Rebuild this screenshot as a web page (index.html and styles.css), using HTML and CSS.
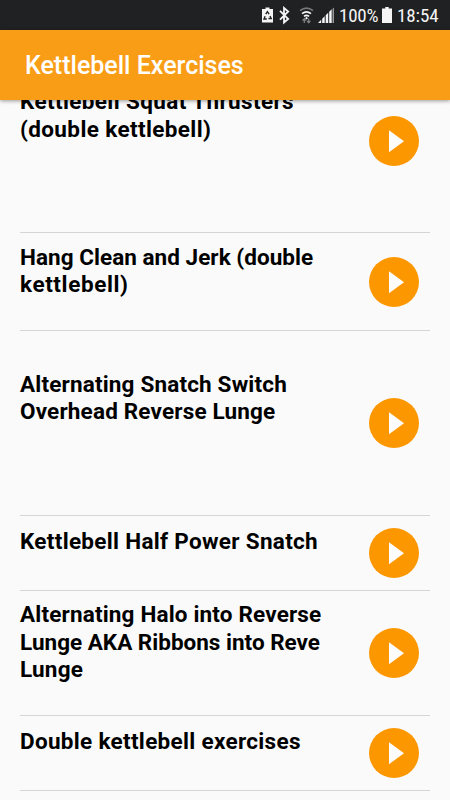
FILE: index.html
```html
<!DOCTYPE html>
<html lang="en">
<head>
<meta charset="utf-8">
<title>Kettlebell Exercises</title>
<link rel="stylesheet" href="styles.css">
</head>
<body>
<svg class="defs" aria-hidden="true">
  <symbol id="play" viewBox="0 0 50 50"><circle cx="25" cy="25" r="25" fill="#fc9700"/><path d="M20 14.200v22L35 25.200z" fill="#fcfcfc"/></symbol>
</svg>
<div class="status">
  <svg class="icons" viewBox="0 0 80 30" fill="none">
    <path d="M4.500 7.500h4V9H12v13.500H1V9h3.500z" fill="#f5f5f5"/>
    <path d="M4.700 14.200l1.700-2.500 1.700 2.500M9 16l1.200 2.500H7.500M5.800 19H3l1.100-2.800" stroke="#202122" stroke-width="1.400"/>
    <path d="M19 10.800l8.200 8.200-4.200 3.500V8l4.200 3.500L19 19.700" stroke="#f5f5f5" stroke-width="1.800"/>
    <path d="M39 10.700q6.500-5 13 0" stroke="#77787a" stroke-width="1.700"/>
    <path d="M41 13.700q4.500-3.500 9 0M43 16.400q2.500-1.900 5 0" stroke="#f5f5f5" stroke-width="1.700"/>
    <path d="M45.500 16.700l1.400 1.500-1.400 1.300-1.400-1.300z" fill="#f5f5f5"/>
    <path d="M43.300 23v-4M41.600 20.700l1.700-2 1.700 2M47.700 18.500v4M46 20.800l1.700 2 1.700-2" stroke="#808183" stroke-width="1.300"/>
    <path d="M57 23l3.200-3.200V23zM61.200 18.700l2.500-2.500V23h-2.500zM64.700 15.200l2.500-2.500V23h-2.500zM68.200 11.700l2.500-2.500V23h-2.500z" fill="#f5f5f5"/><path d="M71.500 9l1.500-1.500V23h-1.500z" fill="#999"/>
  </svg>
  <span class="percent">100%</span>
  <svg class="battery" viewBox="0 0 10 16"><path d="M3.300 0h3.400v1.500H10V16H0V1.500h3.300z" fill="#f5f5f5"/></svg>
  <span class="time">18:54</span>
</div>
<header class="bar"><h1>Kettlebell Exercises</h1></header>
<main class="list">
  <article class="row r1"><h2 class="two-extra"><span class="s39">Kettlebell Squat Thrusters</span><span class="s39">(double kettlebell)</span></h2><svg class="play"><use href="#play"/></svg></article>
  <article class="row r2"><h2><span class="s04">Hang Clean and Jerk (double</span><span class="s60">kettlebell)</span></h2><svg class="play"><use href="#play"/></svg></article>
  <article class="row r3"><h2 class="two-extra"><span class="s16">Alternating Snatch Switch</span><span class="s16">Overhead Reverse Lunge</span></h2><svg class="play"><use href="#play"/></svg></article>
  <article class="row r4"><h2><span class="s31">Kettlebell Half Power Snatch</span></h2><svg class="play"><use href="#play"/></svg></article>
  <article class="row r5"><h2><span class="s16">Alternating Halo into Reverse</span><span class="s00">Lunge AKA Ribbons into Reve</span><span class="s16">Lunge</span></h2><svg class="play"><use href="#play"/></svg></article>
  <article class="row r6"><h2><span class="s31">Double kettlebell exercises</span></h2><svg class="play"><use href="#play"/></svg></article>
</main>
</body>
</html>
```
FILE: styles.css
```css
* { box-sizing: border-box; }
body { margin: 0; width: 450px; height: 800px; overflow: hidden; display: flex; flex-direction: column; background: #fafafa; color: #000; font-family: Roboto, "Liberation Sans", sans-serif; }
.defs { display: none; }
.status { flex: none; height: 30px; background: #202122; color: #f5f5f5; display: flex; align-items: center; justify-content: flex-end; padding-right: 11px; font: 19px/30px "Roboto Condensed", Roboto, sans-serif; }
.status span { padding-top: 1px; }
.icons { width: 80px; height: 30px; }
.percent { width: 39px; margin-left: -1.500px; letter-spacing: -.2px; }
.battery { width: 10px; height: 16px; margin: 0 5px 0 4px; }
.time { width: 42px; letter-spacing: -.1px; }
.bar { flex: none; position: relative; z-index: 1; height: 70px; background: #f99d16; display: flex; align-items: center; padding-left: 25px; box-shadow: 0 1px 4px rgba(0, 0, 0, .4); }
h1 { margin: 1px 0 0; color: #fff; font-size: 25px; font-weight: 500; line-height: 30px; }
.list { flex: 1; min-height: 0; padding: 0 20px; margin-top: -51px; }
.row { display: flex; align-items: center; justify-content: space-between; padding-right: 11.500px; border-bottom: 1px solid #d5d5d5; }
.r1 { height: 184px; }
.r2 { height: 98px; }
.r3 { height: 185px; }
.r4 { height: 74.500px; }
.r5 { height: 125.500px; }
.r6 { height: 75px; }
h2 { margin: 0; padding-bottom: 22px; font-size: 22.5px; font-weight: 700; line-height: 27.5px; white-space: nowrap; }
.r2 h2, .r5 h2 { padding-bottom: 21px; }
h2 span { display: block; }
h2.two-extra { padding-bottom: 50px; }
.s00 { letter-spacing: 0; }
.s04 { letter-spacing: .04px; }
.s16 { letter-spacing: .17px; }
.s31 { letter-spacing: .31px; }
.s39 { letter-spacing: .38px; }
.s60 { letter-spacing: .6px; }
.play { flex: none; width: 50px; height: 50px; }
```
